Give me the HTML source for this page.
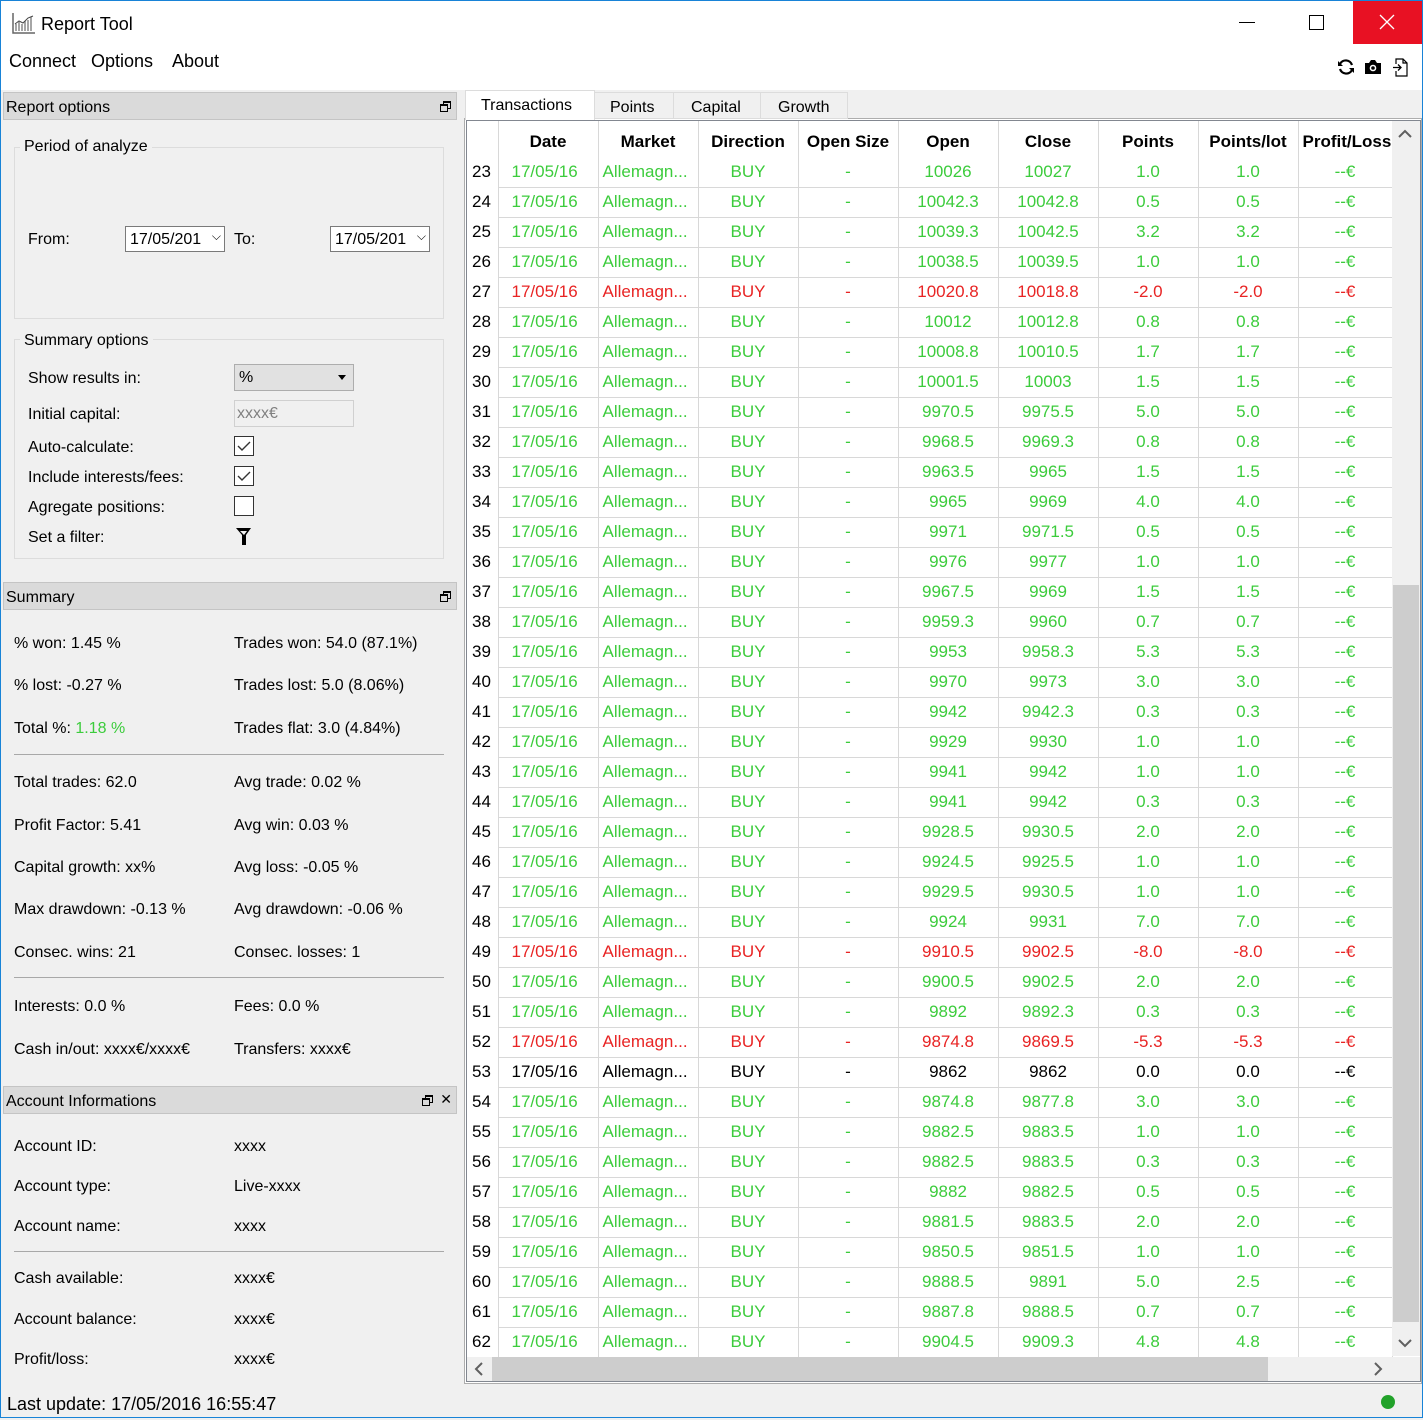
<!DOCTYPE html><html><head><meta charset="utf-8"><style>
*{box-sizing:border-box;margin:0;padding:0}
body{width:1423px;height:1418px;position:relative;background:#f0f0f0;font-family:"Liberation Sans",sans-serif;font-size:16px;color:#000;overflow:hidden}
.a{position:absolute;white-space:nowrap}
.win{position:absolute;left:0;top:0;width:1423px;height:1418px;border:1px solid #1883d7;pointer-events:none}
.dock{position:absolute;left:3px;width:454px;height:28px;background:#dadada;border:1px solid #c4c4c4;padding:6px 2px 0;font-size:16px}
.fl{position:absolute;right:6px;top:8px;width:10px;height:10px}
.fl:before{content:"";position:absolute;left:3px;top:0;width:6px;height:5px;border:1px solid #000;border-top-width:2px}
.fl:after{content:"";position:absolute;left:0;top:3px;width:6px;height:5px;border:1px solid #000;border-top-width:2px;background:#dadada}
.grp{position:absolute;border:1px solid #dcdcdc}
.sep{position:absolute;left:14px;width:430px;height:1px;background:#a8a8a8}
.cb{position:absolute;width:20px;height:20px;border:1px solid #333;background:#fff}
.L{position:absolute;left:0;top:2px;width:460px;height:1418px}
table{position:absolute;left:467px;top:121px;border-collapse:collapse;table-layout:fixed;background:#fff}
td,th{height:30px;border-right:1px solid #d8d8d8;border-bottom:1px solid #d8d8d8;text-align:center;font-size:17px;font-weight:normal;overflow:hidden;white-space:nowrap;padding:0}
th{height:36px;font-weight:bold;border-bottom:none;vertical-align:bottom;padding-bottom:5px}
td.n{text-align:left;padding-left:5px;color:#000;border-bottom:none;background:#fff}
td.l{text-align:left;padding-left:13px}td.m{text-align:left;padding-left:4px}
tr.g td{color:#3ccc3c}tr.r td{color:#e82424}tr.k td{color:#000}
tr td.n{color:#000}
</style></head><body>
<svg class="a" style="left:12px;top:12px" width="24" height="22" viewBox="0 0 24 22"><path d="M1 1v20h22" stroke="#666" fill="none" stroke-width="1.5"/><path d="M4 19V12M7 19V10M10 19V12M13 19V9M16 19V8M19 19V5" stroke="#888" stroke-width="1.5"/><path d="M3 12l4-3 4 2 5-5 5-2" stroke="#444" fill="none"/></svg>
<div class="a" style="left:41px;top:14px;font-size:18px">Report Tool</div>
<div class="a" style="left:1239px;top:22px;width:16px;height:1px;background:#000"></div>
<div class="a" style="left:1309px;top:15px;width:15px;height:15px;border:1px solid #000"></div>
<div class="a" style="left:1353px;top:1px;width:69px;height:43px;background:#e81123"></div>
<svg class="a" style="left:1379px;top:14px" width="16" height="16"><path d="M1 1L15 15M15 1L1 15" stroke="#fff" stroke-width="1.3"/></svg>
<div class="a" style="left:1px;top:1px;width:1352px;height:89px;background:#fff;z-index:-1"></div>
<div class="a" style="left:1px;top:44px;width:1421px;height:46px;background:#fff;z-index:-1"></div>
<div class="a" style="left:9px;top:51px;font-size:18px">Connect</div>
<div class="a" style="left:91px;top:51px;font-size:18px">Options</div>
<div class="a" style="left:172px;top:51px;font-size:18px">About</div>
<svg class="a" style="left:1337px;top:58px" width="18" height="18" viewBox="0 0 18 18"><path d="M15 7A6.5 6.5 0 0 0 3 6M3 11a6.5 6.5 0 0 0 12 1" stroke="#000" stroke-width="2.2" fill="none"/><path d="M1 3v5h5zM17 15v-5h-5z" fill="#000"/></svg>
<svg class="a" style="left:1364px;top:59px" width="18" height="16" viewBox="0 0 18 16"><path d="M1 4h4l2-3h4l2 3h4v11H1z" fill="#000"/><circle cx="9" cy="9" r="3.3" fill="#fff"/><circle cx="9" cy="9" r="1.8" fill="#000"/></svg>
<svg class="a" style="left:1392px;top:58px" width="16" height="19" viewBox="0 0 16 19"><path d="M4 6V1h7l4 4v13H4v-5M11 1v4h4" stroke="#000" fill="none" stroke-width="1.2"/><path d="M1 9.5h8M6 6.5l3 3-3 3" stroke="#000" fill="none" stroke-width="1.3"/></svg>

<div class="dock" style="top:92px">Report options<div class="fl"></div></div>
<div class="dock" style="top:582px">Summary<div class="fl"></div></div>
<div class="dock" style="top:1086px">Account Informations<div class="fl" style="right:24px"></div><span style="position:absolute;right:4px;top:4px;font-size:14px">✕</span></div>
<div class="L">
<div class="grp" style="left:14px;top:145px;width:430px;height:172px"></div>
<div class="a" style="left:20px;top:136px;background:#f0f0f0;padding:0 4px">Period of analyze</div>
<div class="a" style="left:28px;top:229px">From:</div>
<div class="a" style="left:125px;top:224px;width:100px;height:26px;border:1px solid #7a7a7a;background:#fff;padding:4px 4px;font-size:16px">17/05/201<span style="position:absolute;right:3px;top:2px;font-size:12px">&#x2335;</span></div>
<div class="a" style="left:234px;top:229px">To:</div>
<div class="a" style="left:330px;top:224px;width:100px;height:26px;border:1px solid #7a7a7a;background:#fff;padding:4px 4px;font-size:16px">17/05/201<span style="position:absolute;right:3px;top:2px;font-size:12px">&#x2335;</span></div>
<div class="grp" style="left:14px;top:337px;width:430px;height:220px"></div>
<div class="a" style="left:20px;top:330px;background:#f0f0f0;padding:0 4px">Summary options</div>
<div class="a" style="left:28px;top:368px">Show results in:</div>
<div class="a" style="left:234px;top:362px;width:120px;height:27px;border:1px solid #adadad;background:#e1e1e1;padding:4px 4px">%<span style="position:absolute;right:7px;top:10px;border:4px solid transparent;border-top:5px solid #000"></span></div>
<div class="a" style="left:28px;top:404px">Initial capital:</div>
<div class="a" style="left:234px;top:398px;width:120px;height:27px;border:1px solid #d0d0d0;background:#f0f0f0;padding:4px 2px;color:#808080">xxxx€</div>
<div class="a" style="left:28px;top:437px">Auto-calculate:</div>
<div class="cb" style="left:234px;top:434px"><svg width="18" height="18"><path d="M3 9l4 4 8-8" stroke="#333" fill="none" stroke-width="1.4"/></svg></div>
<div class="a" style="left:28px;top:467px">Include interests/fees:</div>
<div class="cb" style="left:234px;top:464px"><svg width="18" height="18"><path d="M3 9l4 4 8-8" stroke="#333" fill="none" stroke-width="1.4"/></svg></div>
<div class="a" style="left:28px;top:497px">Agregate positions:</div>
<div class="cb" style="left:234px;top:494px"></div>
<div class="a" style="left:28px;top:527px">Set a filter:</div>
<svg class="a" style="left:236px;top:526px" width="15" height="17"><path d="M0 0h15l-5 7v10H6V7z" fill="#000"/><path d="M4 3h7l-3 4z" fill="#f0f0f0"/></svg>

<div class="a" style="left:14px;top:633px">% won: 1.45 %</div><div class="a" style="left:234px;top:633px">Trades won: 54.0 (87.1%)</div>
<div class="a" style="left:14px;top:675px">% lost: -0.27 %</div><div class="a" style="left:234px;top:675px">Trades lost: 5.0 (8.06%)</div>
<div class="a" style="left:14px;top:718px">Total %: <span style="color:#3ccc3c">1.18 %</span></div><div class="a" style="left:234px;top:718px">Trades flat: 3.0 (4.84%)</div>
<div class="sep" style="top:752px"></div>
<div class="a" style="left:14px;top:772px">Total trades: 62.0</div><div class="a" style="left:234px;top:772px">Avg trade: 0.02 %</div>
<div class="a" style="left:14px;top:815px">Profit Factor: 5.41</div><div class="a" style="left:234px;top:815px">Avg win: 0.03 %</div>
<div class="a" style="left:14px;top:857px">Capital growth: xx%</div><div class="a" style="left:234px;top:857px">Avg loss: -0.05 %</div>
<div class="a" style="left:14px;top:899px">Max drawdown: -0.13 %</div><div class="a" style="left:234px;top:899px">Avg drawdown: -0.06 %</div>
<div class="a" style="left:14px;top:942px">Consec. wins: 21</div><div class="a" style="left:234px;top:942px">Consec. losses: 1</div>
<div class="sep" style="top:975px"></div>
<div class="a" style="left:14px;top:996px">Interests: 0.0 %</div><div class="a" style="left:234px;top:996px">Fees: 0.0 %</div>
<div class="a" style="left:14px;top:1039px">Cash in/out: xxxx€/xxxx€</div><div class="a" style="left:234px;top:1039px">Transfers: xxxx€</div>

<div class="a" style="left:14px;top:1136px">Account ID:</div><div class="a" style="left:234px;top:1136px">xxxx</div>
<div class="a" style="left:14px;top:1176px">Account type:</div><div class="a" style="left:234px;top:1176px">Live-xxxx</div>
<div class="a" style="left:14px;top:1216px">Account name:</div><div class="a" style="left:234px;top:1216px">xxxx</div>
<div class="sep" style="top:1249px"></div>
<div class="a" style="left:14px;top:1268px">Cash available:</div><div class="a" style="left:234px;top:1268px">xxxx€</div>
<div class="a" style="left:14px;top:1309px">Account balance:</div><div class="a" style="left:234px;top:1309px">xxxx€</div>
<div class="a" style="left:14px;top:1349px">Profit/loss:</div><div class="a" style="left:234px;top:1349px">xxxx€</div>
<div class="a" style="left:7px;top:1392px;font-size:18px">Last update: 17/05/2016 16:55:47</div>
</div>
<div class="a" style="left:1381px;top:1395px;width:14px;height:14px;border-radius:50%;background:#22a22a"></div>

<div class="a" style="left:464px;top:118px;width:958px;height:1266px;border:1px solid #adadad;background:#fff"></div>
<div class="a" style="left:465px;top:90px;width:130px;height:30px;background:#fff;border:1px solid #dcdcdc;border-bottom:none;padding:6px 15px">Transactions</div>
<div class="a" style="left:594px;top:92px;width:80px;height:27px;border:1px solid #dcdcdc;padding:6px 15px">Points</div>
<div class="a" style="left:673px;top:92px;width:88px;height:27px;border:1px solid #dcdcdc;padding:6px 17px">Capital</div>
<div class="a" style="left:760px;top:92px;width:88px;height:27px;border:1px solid #dcdcdc;padding:6px 17px">Growth</div>
<div class="a" style="left:466px;top:120px;width:955px;height:1262px;border:1px solid #828790;background:#fff"></div>

<table>
<colgroup><col style="width:31px"><col style="width:100px"><col style="width:100px"><col style="width:100px"><col style="width:100px"><col style="width:100px"><col style="width:100px"><col style="width:100px"><col style="width:100px"><col style="width:94px"></colgroup>
<tr><th style="border-right:1px solid #d8d8d8"></th><th>Date</th><th>Market</th><th>Direction</th><th>Open Size</th><th>Open</th><th>Close</th><th>Points</th><th>Points/lot</th><th style="text-align:left;padding-left:4px">Profit/Loss</th></tr>
<tr class="g"><td class="n">23</td><td class="l">17/05/16</td><td class="m">Allemagn...</td><td>BUY</td><td>-</td><td>10026</td><td>10027</td><td>1.0</td><td>1.0</td><td>--€</td></tr>
<tr class="g"><td class="n">24</td><td class="l">17/05/16</td><td class="m">Allemagn...</td><td>BUY</td><td>-</td><td>10042.3</td><td>10042.8</td><td>0.5</td><td>0.5</td><td>--€</td></tr>
<tr class="g"><td class="n">25</td><td class="l">17/05/16</td><td class="m">Allemagn...</td><td>BUY</td><td>-</td><td>10039.3</td><td>10042.5</td><td>3.2</td><td>3.2</td><td>--€</td></tr>
<tr class="g"><td class="n">26</td><td class="l">17/05/16</td><td class="m">Allemagn...</td><td>BUY</td><td>-</td><td>10038.5</td><td>10039.5</td><td>1.0</td><td>1.0</td><td>--€</td></tr>
<tr class="r"><td class="n">27</td><td class="l">17/05/16</td><td class="m">Allemagn...</td><td>BUY</td><td>-</td><td>10020.8</td><td>10018.8</td><td>-2.0</td><td>-2.0</td><td>--€</td></tr>
<tr class="g"><td class="n">28</td><td class="l">17/05/16</td><td class="m">Allemagn...</td><td>BUY</td><td>-</td><td>10012</td><td>10012.8</td><td>0.8</td><td>0.8</td><td>--€</td></tr>
<tr class="g"><td class="n">29</td><td class="l">17/05/16</td><td class="m">Allemagn...</td><td>BUY</td><td>-</td><td>10008.8</td><td>10010.5</td><td>1.7</td><td>1.7</td><td>--€</td></tr>
<tr class="g"><td class="n">30</td><td class="l">17/05/16</td><td class="m">Allemagn...</td><td>BUY</td><td>-</td><td>10001.5</td><td>10003</td><td>1.5</td><td>1.5</td><td>--€</td></tr>
<tr class="g"><td class="n">31</td><td class="l">17/05/16</td><td class="m">Allemagn...</td><td>BUY</td><td>-</td><td>9970.5</td><td>9975.5</td><td>5.0</td><td>5.0</td><td>--€</td></tr>
<tr class="g"><td class="n">32</td><td class="l">17/05/16</td><td class="m">Allemagn...</td><td>BUY</td><td>-</td><td>9968.5</td><td>9969.3</td><td>0.8</td><td>0.8</td><td>--€</td></tr>
<tr class="g"><td class="n">33</td><td class="l">17/05/16</td><td class="m">Allemagn...</td><td>BUY</td><td>-</td><td>9963.5</td><td>9965</td><td>1.5</td><td>1.5</td><td>--€</td></tr>
<tr class="g"><td class="n">34</td><td class="l">17/05/16</td><td class="m">Allemagn...</td><td>BUY</td><td>-</td><td>9965</td><td>9969</td><td>4.0</td><td>4.0</td><td>--€</td></tr>
<tr class="g"><td class="n">35</td><td class="l">17/05/16</td><td class="m">Allemagn...</td><td>BUY</td><td>-</td><td>9971</td><td>9971.5</td><td>0.5</td><td>0.5</td><td>--€</td></tr>
<tr class="g"><td class="n">36</td><td class="l">17/05/16</td><td class="m">Allemagn...</td><td>BUY</td><td>-</td><td>9976</td><td>9977</td><td>1.0</td><td>1.0</td><td>--€</td></tr>
<tr class="g"><td class="n">37</td><td class="l">17/05/16</td><td class="m">Allemagn...</td><td>BUY</td><td>-</td><td>9967.5</td><td>9969</td><td>1.5</td><td>1.5</td><td>--€</td></tr>
<tr class="g"><td class="n">38</td><td class="l">17/05/16</td><td class="m">Allemagn...</td><td>BUY</td><td>-</td><td>9959.3</td><td>9960</td><td>0.7</td><td>0.7</td><td>--€</td></tr>
<tr class="g"><td class="n">39</td><td class="l">17/05/16</td><td class="m">Allemagn...</td><td>BUY</td><td>-</td><td>9953</td><td>9958.3</td><td>5.3</td><td>5.3</td><td>--€</td></tr>
<tr class="g"><td class="n">40</td><td class="l">17/05/16</td><td class="m">Allemagn...</td><td>BUY</td><td>-</td><td>9970</td><td>9973</td><td>3.0</td><td>3.0</td><td>--€</td></tr>
<tr class="g"><td class="n">41</td><td class="l">17/05/16</td><td class="m">Allemagn...</td><td>BUY</td><td>-</td><td>9942</td><td>9942.3</td><td>0.3</td><td>0.3</td><td>--€</td></tr>
<tr class="g"><td class="n">42</td><td class="l">17/05/16</td><td class="m">Allemagn...</td><td>BUY</td><td>-</td><td>9929</td><td>9930</td><td>1.0</td><td>1.0</td><td>--€</td></tr>
<tr class="g"><td class="n">43</td><td class="l">17/05/16</td><td class="m">Allemagn...</td><td>BUY</td><td>-</td><td>9941</td><td>9942</td><td>1.0</td><td>1.0</td><td>--€</td></tr>
<tr class="g"><td class="n">44</td><td class="l">17/05/16</td><td class="m">Allemagn...</td><td>BUY</td><td>-</td><td>9941</td><td>9942</td><td>0.3</td><td>0.3</td><td>--€</td></tr>
<tr class="g"><td class="n">45</td><td class="l">17/05/16</td><td class="m">Allemagn...</td><td>BUY</td><td>-</td><td>9928.5</td><td>9930.5</td><td>2.0</td><td>2.0</td><td>--€</td></tr>
<tr class="g"><td class="n">46</td><td class="l">17/05/16</td><td class="m">Allemagn...</td><td>BUY</td><td>-</td><td>9924.5</td><td>9925.5</td><td>1.0</td><td>1.0</td><td>--€</td></tr>
<tr class="g"><td class="n">47</td><td class="l">17/05/16</td><td class="m">Allemagn...</td><td>BUY</td><td>-</td><td>9929.5</td><td>9930.5</td><td>1.0</td><td>1.0</td><td>--€</td></tr>
<tr class="g"><td class="n">48</td><td class="l">17/05/16</td><td class="m">Allemagn...</td><td>BUY</td><td>-</td><td>9924</td><td>9931</td><td>7.0</td><td>7.0</td><td>--€</td></tr>
<tr class="r"><td class="n">49</td><td class="l">17/05/16</td><td class="m">Allemagn...</td><td>BUY</td><td>-</td><td>9910.5</td><td>9902.5</td><td>-8.0</td><td>-8.0</td><td>--€</td></tr>
<tr class="g"><td class="n">50</td><td class="l">17/05/16</td><td class="m">Allemagn...</td><td>BUY</td><td>-</td><td>9900.5</td><td>9902.5</td><td>2.0</td><td>2.0</td><td>--€</td></tr>
<tr class="g"><td class="n">51</td><td class="l">17/05/16</td><td class="m">Allemagn...</td><td>BUY</td><td>-</td><td>9892</td><td>9892.3</td><td>0.3</td><td>0.3</td><td>--€</td></tr>
<tr class="r"><td class="n">52</td><td class="l">17/05/16</td><td class="m">Allemagn...</td><td>BUY</td><td>-</td><td>9874.8</td><td>9869.5</td><td>-5.3</td><td>-5.3</td><td>--€</td></tr>
<tr class="k"><td class="n">53</td><td class="l">17/05/16</td><td class="m">Allemagn...</td><td>BUY</td><td>-</td><td>9862</td><td>9862</td><td>0.0</td><td>0.0</td><td>--€</td></tr>
<tr class="g"><td class="n">54</td><td class="l">17/05/16</td><td class="m">Allemagn...</td><td>BUY</td><td>-</td><td>9874.8</td><td>9877.8</td><td>3.0</td><td>3.0</td><td>--€</td></tr>
<tr class="g"><td class="n">55</td><td class="l">17/05/16</td><td class="m">Allemagn...</td><td>BUY</td><td>-</td><td>9882.5</td><td>9883.5</td><td>1.0</td><td>1.0</td><td>--€</td></tr>
<tr class="g"><td class="n">56</td><td class="l">17/05/16</td><td class="m">Allemagn...</td><td>BUY</td><td>-</td><td>9882.5</td><td>9883.5</td><td>0.3</td><td>0.3</td><td>--€</td></tr>
<tr class="g"><td class="n">57</td><td class="l">17/05/16</td><td class="m">Allemagn...</td><td>BUY</td><td>-</td><td>9882</td><td>9882.5</td><td>0.5</td><td>0.5</td><td>--€</td></tr>
<tr class="g"><td class="n">58</td><td class="l">17/05/16</td><td class="m">Allemagn...</td><td>BUY</td><td>-</td><td>9881.5</td><td>9883.5</td><td>2.0</td><td>2.0</td><td>--€</td></tr>
<tr class="g"><td class="n">59</td><td class="l">17/05/16</td><td class="m">Allemagn...</td><td>BUY</td><td>-</td><td>9850.5</td><td>9851.5</td><td>1.0</td><td>1.0</td><td>--€</td></tr>
<tr class="g"><td class="n">60</td><td class="l">17/05/16</td><td class="m">Allemagn...</td><td>BUY</td><td>-</td><td>9888.5</td><td>9891</td><td>5.0</td><td>2.5</td><td>--€</td></tr>
<tr class="g"><td class="n">61</td><td class="l">17/05/16</td><td class="m">Allemagn...</td><td>BUY</td><td>-</td><td>9887.8</td><td>9888.5</td><td>0.7</td><td>0.7</td><td>--€</td></tr>
<tr class="g"><td class="n">62</td><td class="l">17/05/16</td><td class="m">Allemagn...</td><td>BUY</td><td>-</td><td>9904.5</td><td>9909.3</td><td>4.8</td><td>4.8</td><td>--€</td></tr>
</table>
<div class="a" style="left:1392px;top:121px;width:28px;height:1235px;background:#f0f0f0"></div>
<div class="a" style="left:1393px;top:585px;width:26px;height:737px;background:#cdcdcd"></div>
<svg class="a" style="left:1398px;top:128px" width="14" height="12"><path d="M1 9l6-6 6 6" stroke="#606060" stroke-width="2" fill="none"/></svg>
<svg class="a" style="left:1398px;top:1337px" width="14" height="12"><path d="M1 3l6 6 6-6" stroke="#606060" stroke-width="2" fill="none"/></svg>
<div class="a" style="left:467px;top:1357px;width:925px;height:24px;background:#f0f0f0"></div>
<div class="a" style="left:492px;top:1357px;width:776px;height:24px;background:#cdcdcd"></div>
<svg class="a" style="left:473px;top:1362px" width="12" height="14"><path d="M9 1L3 7l6 6" stroke="#606060" stroke-width="2" fill="none"/></svg>
<svg class="a" style="left:1372px;top:1362px" width="12" height="14"><path d="M3 1l6 6-6 6" stroke="#606060" stroke-width="2" fill="none"/></svg>
<div class="a" style="left:1392px;top:1357px;width:28px;height:24px;background:#f0f0f0"></div>
<div class="win"></div>
</body></html>
